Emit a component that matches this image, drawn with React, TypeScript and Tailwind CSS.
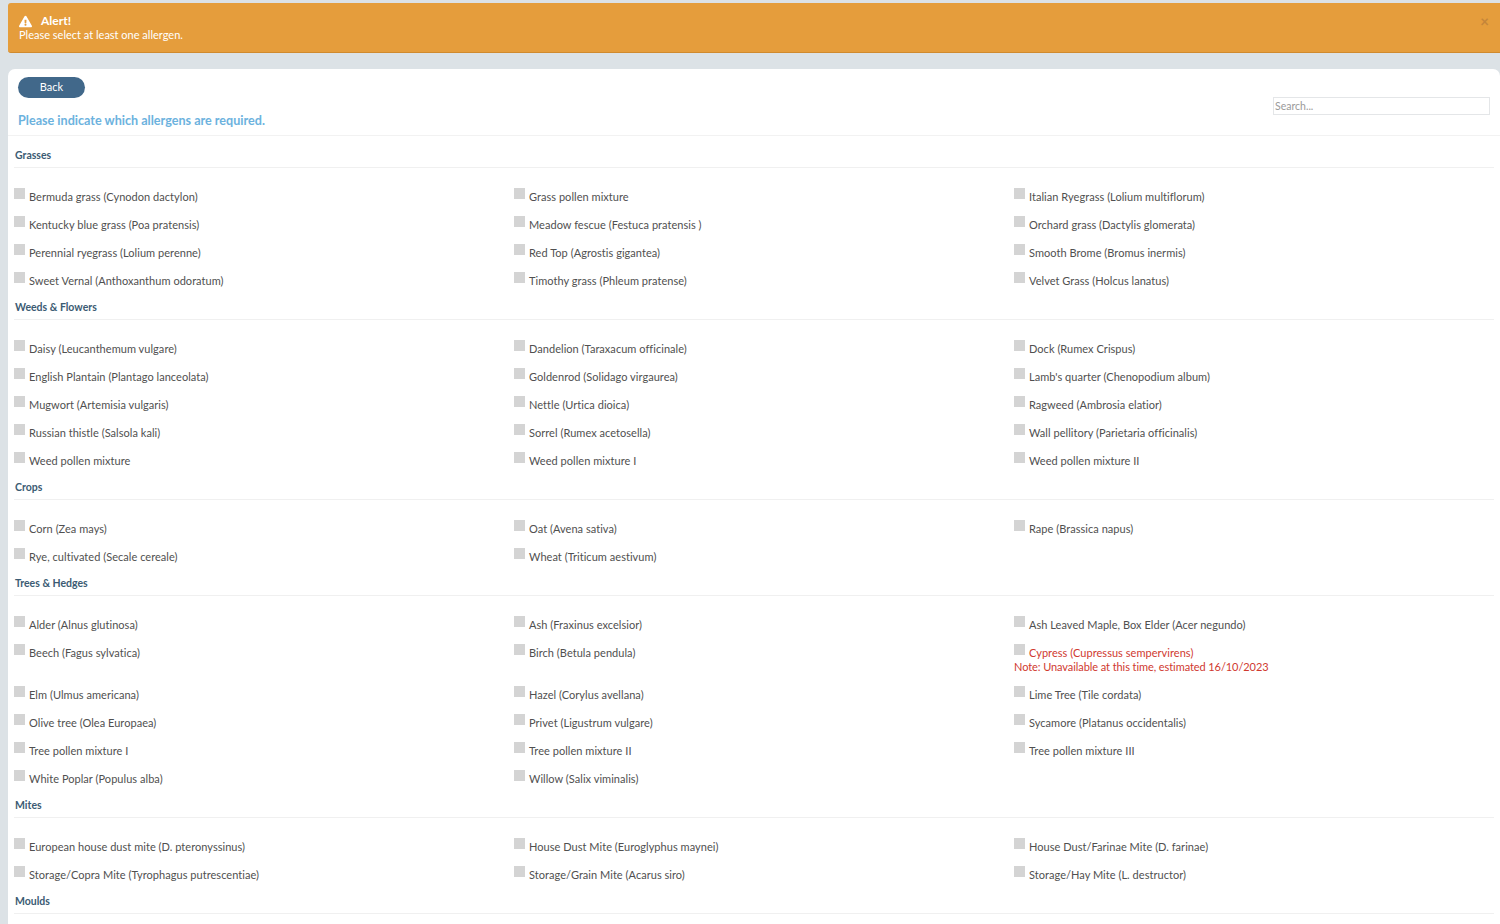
import { FaExclamationTriangle } from 'react-icons/fa';

interface Section {
  title: string;
  items: string[];
}

const sections: Section[] = [
  {
    title: 'Grasses',
    items: [
      'Bermuda grass (Cynodon dactylon)', 'Grass pollen mixture', 'Italian Ryegrass (Lolium multiflorum)',
      'Kentucky blue grass (Poa pratensis)', 'Meadow fescue (Festuca pratensis )', 'Orchard grass (Dactylis glomerata)',
      'Perennial ryegrass (Lolium perenne)', 'Red Top (Agrostis gigantea)', 'Smooth Brome (Bromus inermis)',
      'Sweet Vernal (Anthoxanthum odoratum)', 'Timothy grass (Phleum pratense)', 'Velvet Grass (Holcus lanatus)',
    ],
  },
  {
    title: 'Weeds & Flowers',
    items: [
      'Daisy (Leucanthemum vulgare)', 'Dandelion (Taraxacum officinale)', 'Dock (Rumex Crispus)',
      'English Plantain (Plantago lanceolata)', 'Goldenrod (Solidago virgaurea)', "Lamb's quarter (Chenopodium album)",
      'Mugwort (Artemisia vulgaris)', 'Nettle (Urtica dioica)', 'Ragweed (Ambrosia elatior)',
      'Russian thistle (Salsola kali)', 'Sorrel (Rumex acetosella)', 'Wall pellitory (Parietaria officinalis)',
      'Weed pollen mixture', 'Weed pollen mixture I', 'Weed pollen mixture II',
    ],
  },
  {
    title: 'Crops',
    items: [
      'Corn (Zea mays)', 'Oat (Avena sativa)', 'Rape (Brassica napus)',
      'Rye, cultivated (Secale cereale)', 'Wheat (Triticum aestivum)',
    ],
  },
  {
    title: 'Trees & Hedges',
    items: [
      'Alder (Alnus glutinosa)', 'Ash (Fraxinus excelsior)', 'Ash Leaved Maple, Box Elder (Acer negundo)',
      'Beech (Fagus sylvatica)', 'Birch (Betula pendula)', 'Cypress (Cupressus sempervirens)',
      'Elm (Ulmus americana)', 'Hazel (Corylus avellana)', 'Lime Tree (Tile cordata)',
      'Olive tree (Olea Europaea)', 'Privet (Ligustrum vulgare)', 'Sycamore (Platanus occidentalis)',
      'Tree pollen mixture I', 'Tree pollen mixture II', 'Tree pollen mixture III',
      'White Poplar (Populus alba)', 'Willow (Salix viminalis)',
    ],
  },
  {
    title: 'Mites',
    items: [
      'European house dust mite (D. pteronyssinus)', 'House Dust Mite (Euroglyphus maynei)', 'House Dust/Farinae Mite (D. farinae)',
      'Storage/Copra Mite (Tyrophagus putrescentiae)', 'Storage/Grain Mite (Acarus siro)', 'Storage/Hay Mite (L. destructor)',
    ],
  },
  { title: 'Moulds', items: [] },
];

const NOTES: Record<string, string> = {
  'Cypress (Cupressus sempervirens)': 'Note: Unavailable at this time, estimated 16/10/2023',
};

function Allergen({ name }: { name: string }) {
  const note = NOTES[name];
  return (
    <div className={`pt-[5px] pb-[7px] text-[11px] leading-[14px] tracking-[0.04px] ${note ? 'text-[#d0392f]' : 'text-[#505050]'}`}>
      <div className="flex items-start">
        <span className="w-[11px] h-[11px] bg-[#d4d4d4] shrink-0 mr-[4px]" />
        <span className="mt-[2px]">{name}</span>
      </div>
      {note && <div className="tracking-[-0.08px]">{note}</div>}
    </div>
  );
}

export default function App() {
  return (
    <div className="h-[924px] overflow-hidden bg-[#dce2e6] pt-[3px] pl-[8px] font-['Lato',sans-serif]">
      {/* Alert */}
      <div className="h-[50px] bg-[#e59d3c] border-b border-[#d08a2e] rounded-l-[3px] pl-[11px] pr-[11px] pt-[11px] text-white flex justify-between">
        <div>
          <div className="flex items-center h-[14px] text-[12px] font-bold">
            <FaExclamationTriangle className="w-[13px] h-[13px] mr-[9px]" />
            Alert!
          </div>
          <div className="text-[11px] leading-[14px]">Please select at least one allergen.</div>
        </div>
        <span className="text-[15px] leading-[14px] font-bold text-[#c4853a]">×</span>
      </div>

      {/* Card */}
      <div className="mt-[16px] bg-white rounded-t-[7px] h-[900px]">
        <div className="h-[67px] border-b border-[#f2f2f2] flex justify-between pl-[10px] pr-[10px]">
          <div className="pt-[8px]">
            <button className="block w-[67px] h-[21px] rounded-full bg-[#41688a] text-white text-[11px]">Back</button>
            <div className="mt-[16px] text-[12.6px] leading-[14px] font-bold text-[#6cb2de]">
              Please indicate which allergens are required.
            </div>
          </div>
          <input
            placeholder="Search..."
            className="mt-[28px] w-[217px] h-[18px] border border-[#e4e6e8] px-[1px] text-[10.5px] placeholder:text-[#9a9a9a]"
          />
        </div>

        <div className="pl-[6px] pr-[6px] pt-[7px]">
          {sections.map((section) => (
            <div key={section.title}>
              <div className="h-[25px] pt-[5px] pl-[1px] border-b border-[#f0f0f0] text-[10.5px] leading-[14px] font-bold text-[#3b5b73]">
                {section.title}
              </div>
              {section.items.length > 0 && (
                <div className="mt-[15px] grid grid-cols-[500px_500px_1fr]">
                  {section.items.map((name) => (
                    <Allergen key={name} name={name} />
                  ))}
                </div>
              )}
            </div>
          ))}
        </div>
      </div>
    </div>
  );
}
